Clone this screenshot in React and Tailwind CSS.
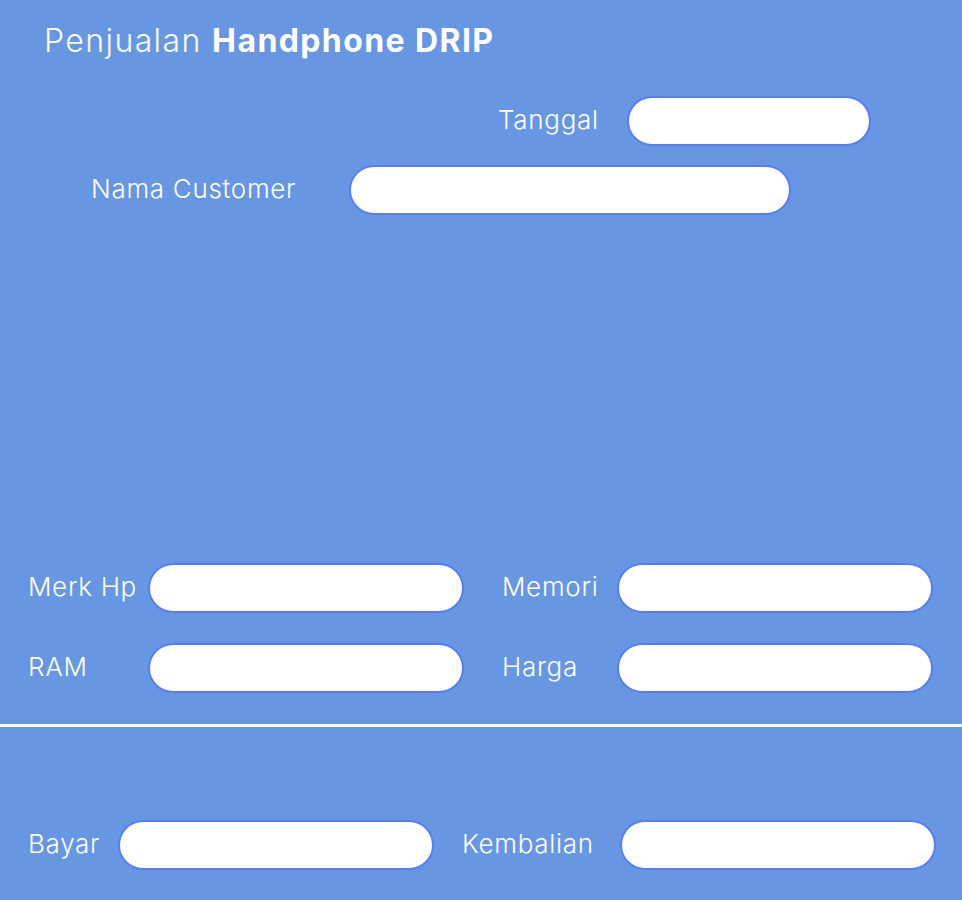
export default function App() {
  const field = 'block bg-white border-2 border-[#5a7cf5] rounded-full h-[50px] outline-none';
  const label = 'pb-[4px] text-[26px] font-light tracking-[0.7px] whitespace-nowrap';

  return (
    <div className="w-full h-[900px] bg-[#6797e3] text-white overflow-hidden font-['Inter','Liberation_Sans',sans-serif]">
      {/* header */}
      <div className="h-[96px] pt-[21px] pl-[44px]">
        <h1 className="text-[32px] leading-[40px] tracking-[1.4px] whitespace-nowrap">
          <span className="font-light">Penjualan </span>
          <span className="font-bold">Handphone DRIP</span>
        </h1>
      </div>

      {/* tanggal */}
      <div className="flex items-center ml-[498px] h-[50px]">
        <label className={`w-[129px] ${label}`}>Tanggal</label>
        <input className={`${field} w-[244px]`} />
      </div>

      {/* nama customer */}
      <div className="flex items-center ml-[91px] mt-[19px] h-[50px]">
        <label className={`w-[258px] ${label}`}>Nama Customer</label>
        <input className={`${field} w-[442px]`} />
      </div>

      {/* detail hp */}
      <div className="mt-[348px] grid grid-cols-[464px_1fr] gap-y-[30px]">
        <div className="flex items-center pl-[28px]">
          <label className={`w-[120px] ${label}`}>Merk Hp</label>
          <input className={`${field} w-[316px]`} />
        </div>
        <div className="flex items-center pl-[38px]">
          <label className={`w-[115px] ${label}`}>Memori</label>
          <input className={`${field} w-[316px]`} />
        </div>
        <div className="flex items-center pl-[28px]">
          <label className={`w-[120px] ${label}`}>RAM</label>
          <input className={`${field} w-[316px]`} />
        </div>
        <div className="flex items-center pl-[38px]">
          <label className={`w-[115px] ${label}`}>Harga</label>
          <input className={`${field} w-[316px]`} />
        </div>
      </div>

      <div className="mt-[31px] h-[3px] bg-white" />

      {/* pembayaran */}
      <div className="mt-[93px] flex items-center">
        <div className="flex items-center pl-[28px] w-[462px]">
          <label className={`w-[90px] ${label}`}>Bayar</label>
          <input className={`${field} w-[316px]`} />
        </div>
        <div className="flex items-center">
          <label className={`w-[158px] ${label}`}>Kembalian</label>
          <input className={`${field} w-[316px]`} />
        </div>
      </div>
    </div>
  );
}
